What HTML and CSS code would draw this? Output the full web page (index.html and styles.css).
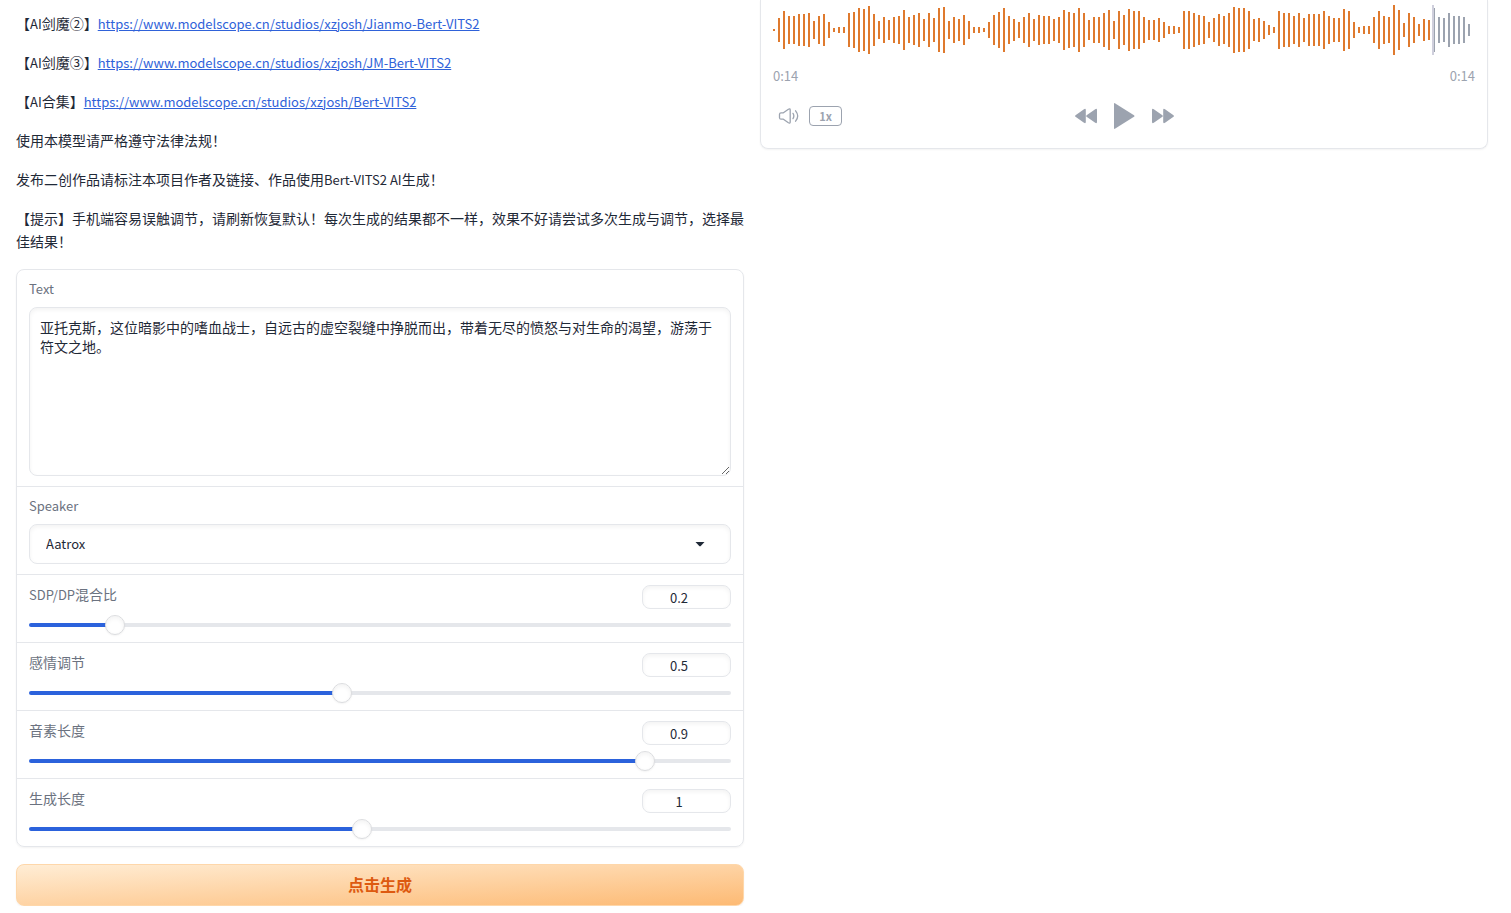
FILE: index.html
```html
<!DOCTYPE html>
<html lang="zh-CN">
<head>
<meta charset="utf-8">
<meta name="viewport" content="width=device-width, initial-scale=1">
<title>Bert-VITS2</title>
<link rel="stylesheet" href="styles.css">
</head>
<body>
<main class="layout">
  <section class="column">
    <div class="prose">
      <p>【<span class="latin">AI</span>剑魔②】<a class="latin" href="https://www.modelscope.cn/studios/xzjosh/Jianmo-Bert-VITS2">https://www.modelscope.cn/studios/xzjosh/Jianmo-Bert-VITS2</a></p>
      <p>【<span class="latin">AI</span>剑魔③】<a class="latin" href="https://www.modelscope.cn/studios/xzjosh/JM-Bert-VITS2">https://www.modelscope.cn/studios/xzjosh/JM-Bert-VITS2</a></p>
      <p>【<span class="latin">AI</span>合集】<a class="latin" href="https://www.modelscope.cn/studios/xzjosh/Bert-VITS2">https://www.modelscope.cn/studios/xzjosh/Bert-VITS2</a></p>
      <p>使用本模型请严格遵守法律法规！</p>
      <p>发布二创作品请标注本项目作者及链接、作品使用<span class="latin">Bert-VITS2 AI</span>生成！</p>
      <p>【提示】手机端容易误触调节，请刷新恢复默认！每次生成的结果都不一样，效果不好请尝试多次生成与调节，选择最佳结果！</p>
    </div>
    <form class="form">
      <div class="block">
        <label class="label latin" for="text">Text</label>
        <textarea class="field textarea" id="text">亚托克斯，这位暗影中的嗜血战士，自远古的虚空裂缝中挣脱而出，带着无尽的愤怒与对生命的渴望，游荡于符文之地。</textarea>
      </div>
      <div class="block">
        <label class="label latin" for="speaker">Speaker</label>
        <div class="select-wrap">
          <select class="field select latin" id="speaker"><option>Aatrox</option></select>
          <svg class="caret" viewBox="0 0 10 5" aria-hidden="true"><path d="M.5 0h9L6 3.7Q5 4.7 4 3.7z"/></svg>
        </div>
      </div>
      <div class="block slider-block">
        <div class="slider-head">
          <label for="sdp"><span class="latin">SDP/DP</span>混合比</label>
          <input class="field number latin" type="number" value="0.2" step="0.1" aria-label="SDP/DP混合比">
        </div>
        <input class="range" id="sdp" type="range" min="0.1" max="1" step="0.1" value="0.2" style="--fill:11.11%">
      </div>
      <div class="block slider-block">
        <div class="slider-head">
          <label for="noise">感情调节</label>
          <input class="field number latin" type="number" value="0.5" step="0.1" aria-label="感情调节">
        </div>
        <input class="range" id="noise" type="range" min="0.1" max="1" step="0.1" value="0.5" style="--fill:44.44%">
      </div>
      <div class="block slider-block">
        <div class="slider-head">
          <label for="noisew">音素长度</label>
          <input class="field number latin" type="number" value="0.9" step="0.1" aria-label="音素长度">
        </div>
        <input class="range" id="noisew" type="range" min="0.1" max="1" step="0.1" value="0.9" style="--fill:88.89%">
      </div>
      <div class="block slider-block">
        <div class="slider-head">
          <label for="length">生成长度</label>
          <input class="field number latin" type="number" value="1" step="0.1" aria-label="生成长度">
        </div>
        <input class="range" id="length" type="range" min="0.1" max="2" step="0.1" value="1" style="--fill:47.37%">
      </div>
    </form>
    <button class="generate" type="button">点击生成</button>
  </section>
  <section class="player">
    <svg class="wave" id="wave" viewBox="0 0 702 50" preserveAspectRatio="none" role="img" aria-label="Waveform"></svg>
    <div class="times latin"><time>0:14</time><time>0:14</time></div>
    <div class="controls">
      <div class="control-group">
        <button class="icon-button" type="button" aria-label="Volume">
          <svg width="21" height="16" viewBox="0 0 21 16" fill="none" stroke="currentColor" stroke-width="1.3" stroke-linecap="round" stroke-linejoin="round"><path d="M3 4.8h2.4L10.4 1.3Q12.2.2 12.2 2.1v11.8q0 1.9-1.8.8L5.4 11.2H3Q1.6 11.2 1.5 9.7V6.3Q1.6 4.8 3 4.8zM15 5.4q1.7 2.6 0 5.2M17.6 2.8q4.2 5.2 0 10.4"/></svg>
        </button>
        <button class="speed" type="button">1x</button>
      </div>
      <div class="control-group transport">
        <button class="icon-button" type="button" aria-label="Rewind">
          <svg width="22" height="16" viewBox="0 0 22 16" fill="currentColor"><path d="M.5 7.2Q-.4 8 .5 8.8L9 14.8Q10.8 15.8 10.8 14V2Q10.8.2 9 1.2zM11.6 7.2Q10.7 8 11.6 8.8L20.2 14.8Q22 15.8 22 14V2Q22 .2 20.2 1.2z"/></svg>
        </button>
        <button class="icon-button" type="button" aria-label="Play">
          <svg width="21" height="26" viewBox="0 0 21 26" fill="currentColor"><path d="M0 1Q0-.4 1.3.4L20 12.2Q21 13 20 13.8L1.3 25.6Q0 26.4 0 25z"/></svg>
        </button>
        <button class="icon-button" type="button" aria-label="Forward">
          <svg width="22" height="16" viewBox="0 0 22 16" fill="currentColor"><path d="M21.5 7.2Q22.4 8 21.5 8.8L13 14.8Q11.2 15.8 11.2 14V2Q11.2.2 13 1.2zM10.4 7.2Q11.3 8 10.4 8.8L1.8 14.8Q0 15.8 0 14V2Q0 .2 1.8 1.2z"/></svg>
        </button>
      </div>
    </div>
  </section>
</main>
<script src="wave.js"></script>
</body>
</html>
```
FILE: styles.css
```css
* { box-sizing: border-box; }
body {
  margin: 0;
  background: #fff;
  color: #1f2937;
  font-family: "Noto Sans CJK SC", "Noto Sans", sans-serif;
  font-size: 14px;
  line-height: 18px;
}
button, input, select, textarea { font: inherit; color: inherit; margin: 0; }
.latin { font-size: 13px; }
.layout {
  display: grid;
  grid-template-columns: minmax(0, 1fr) minmax(0, 1fr);
  align-items: start;
  gap: 16px;
  padding: 0 23px 0 16px;
}
.column { display: flex; flex-direction: column; }
.prose {
  display: flex;
  flex-direction: column;
  gap: 16px;
  padding: 12px 0 16px;
  line-height: 23px;
}
.prose p { margin: 0; }
.prose a { color: #2f62d9; text-decoration: underline; }
.form {
  border: 1px solid #e5e7eb;
  border-radius: 8px;
  box-shadow: 0 1px 2px rgba(0, 0, 0, .05);
  color: #6b7280;
}
.block { padding: 10px 12px; }
.block + .block { border-top: 1px solid #e5e7eb; }
.label { display: block; margin-bottom: 9px; }
.field {
  display: block;
  border: 1px solid #e5e7eb;
  border-radius: 8px;
  background: #fff;
  box-shadow: inset 0 2px 4px rgba(0, 0, 0, .05);
  color: #1f2937;
  outline: none;
}
.textarea { width: 100%; height: 169px; padding: 10px; line-height: 19px; resize: vertical; }
.select-wrap { position: relative; }
.select { width: 100%; height: 40px; padding: 0 16px; appearance: none; }
.caret {
  position: absolute;
  top: 18px;
  right: 26px;
  width: 10px;
  height: 5px;
  fill: #1f2937;
  pointer-events: none;
}
.slider-block { padding-bottom: 7px; }
.slider-head { display: flex; justify-content: space-between; align-items: flex-start; margin-bottom: 6px; }
.number { width: 89px; height: 24px; padding: 0; text-align: center; }
.range {
  display: block;
  width: 100%;
  height: 20px;
  appearance: none;
  background: none;
  outline: none;
}
.range::-webkit-slider-runnable-track {
  height: 4px;
  border-radius: 2px;
  background: linear-gradient(to right, #2b62dc var(--fill), #e5e7eb var(--fill));
}
.range::-webkit-slider-thumb {
  appearance: none;
  width: 20px;
  height: 20px;
  margin-top: -8px;
  border: 1px solid #dcdde0;
  border-radius: 50%;
  background: #fff;
  box-shadow: inset 0 2px 4px rgba(0, 0, 0, .05), 0 1px 2px rgba(0, 0, 0, .05);
}
.generate {
  height: 42px;
  margin-top: 17px;
  padding: 0 0 2px;
  border: 1px solid #fed7aa;
  border-radius: 8px;
  background: linear-gradient(to bottom right, #ffedd5, #fdba74);
  box-shadow: 0 1px 2px rgba(0, 0, 0, .05);
  color: #dd5a10;
  font-size: 16px;
  font-weight: 600;
}
.player {
  border: 1px solid #e5e7eb;
  border-top: 0;
  border-radius: 0 0 8px 8px;
  box-shadow: 0 1px 2px rgba(0, 0, 0, .05);
  padding: 5px 12px 12px;
  color: #9ca3af;
}
.wave { display: block; width: 100%; height: 50px; }
.wave-played { fill: #df7a2e; }
.wave-rest { fill: #9ca3af; }
.wave-cursor { fill: #cfcfdc; }
.times { display: flex; justify-content: space-between; margin: 12px 0 11px; }
.controls {
  display: grid;
  grid-template-columns: 1fr auto 1fr;
  align-items: center;
  height: 40px;
}
.control-group { display: flex; align-items: center; gap: 10px; padding-left: 5px; }
.transport { gap: 17px; padding: 0; }
.icon-button { display: flex; border: 0; padding: 0; background: none; color: #9ca3af; }
.speed {
  width: 33px;
  height: 20px;
  border: 1px solid #9ca3af;
  border-radius: 4px;
  padding: 0;
  background: none;
  font-size: 11px;
  font-weight: 600;
  line-height: 16px;
}
```
FILE: wave.js
```js
const heights = [
  2, 24, 38, 28, 28, 32, 32, 34, 18, 28, 32, 16, 4, 6, 6, 34, 36, 44, 42, 48,
  32, 18, 26, 20, 26, 28, 40, 26, 30, 34, 22, 34, 24, 44, 46, 18, 26, 22, 30, 18,
  6, 6, 4, 16, 30, 36, 44, 28, 22, 16, 26, 34, 22, 30, 28, 28, 22, 26, 40, 36,
  34, 44, 34, 20, 26, 26, 34, 40, 18, 38, 30, 42, 38, 38, 26, 20, 20, 24, 16, 8,
  8, 6, 38, 38, 34, 30, 28, 16, 24, 32, 28, 34, 46, 44, 44, 38, 22, 24, 18, 10,
  6, 38, 34, 34, 28, 34, 24, 32, 32, 32, 38, 28, 24, 24, 42, 38, 16, 6, 8, 8,
  26, 38, 28, 26, 50, 40, 14, 34, 26, 12, 22, 20, 44, 26, 24, 34, 28, 28, 26, 12
];
const playedBars = 132;
const wave = document.getElementById("wave");

function addBar(x, height, className) {
  const bar = document.createElementNS("http://www.w3.org/2000/svg", "rect");
  bar.setAttribute("x", x);
  bar.setAttribute("y", 25 - height / 2);
  bar.setAttribute("width", 2);
  bar.setAttribute("height", height);
  bar.setAttribute("class", className);
  wave.appendChild(bar);
}

heights.forEach((h, i) => addBar(i * 5, h, i < playedBars ? "wave-played" : "wave-rest"));
addBar(playedBars * 5 - 1, 50, "wave-cursor");
```
